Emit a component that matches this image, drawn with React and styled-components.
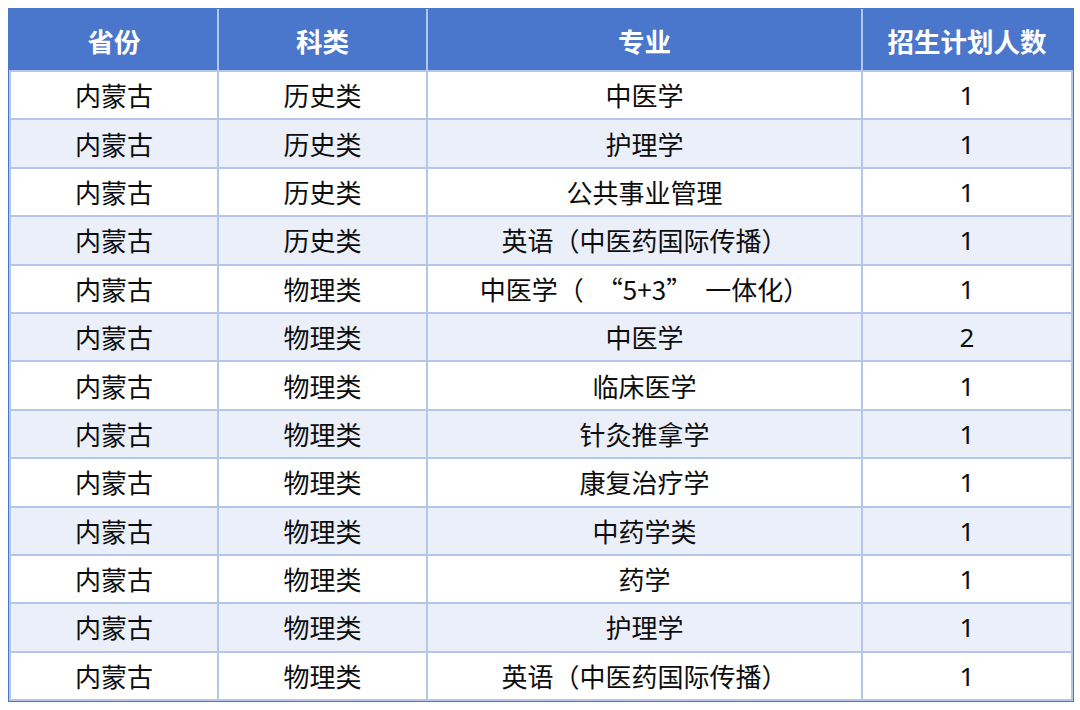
import React from "react";
import styled, { createGlobalStyle } from "styled-components";

const GlobalStyle = createGlobalStyle`
  html, body {
    margin: 0;
    padding: 0;
    background: #ffffff;
  }
  body {
    font-family: "Microsoft YaHei", "Noto Sans CJK SC", "Noto Sans", sans-serif;
  }
`;

const Page = styled.div`
  width: 1080px;
  height: 710px;
  padding: 9px 0 0 9px;
  box-sizing: border-box;
`;

const Table = styled.table`
  width: 1062px;
  border-collapse: collapse;
  table-layout: fixed;
  border: 2px solid #4a76cc;
  box-shadow: 0 0 0 1px #4a76cc;
`;

const HeadCell = styled.th`
  height: 59px;
  padding: 0;
  background: #4a76cc;
  color: #ffffff;
  font-size: 26.5px;
  font-weight: 700;
  text-align: center;
  border-left: 2px solid #b4c7ea;
  border-bottom: 0;
  &:first-child {
    border-left: 0;
  }
`;

const Row = styled.tr`
  height: 48.4px;
  background: ${(p) => (p.$alt ? "#eaeff9" : "#ffffff")};
`;

const Cell = styled.td`
  padding: 0;
  font-size: 26px;
  color: #0d0d0d;
  text-align: center;
  line-height: 1;
  border: 2px solid #b4c7ea;
  font-family: ${(p) =>
    p.$num
      ? '"Noto Sans", "Open Sans", sans-serif'
      : '"Microsoft YaHei", "Noto Sans CJK SC", sans-serif'};
`;

const rows = [
  ["内蒙古", "历史类", "中医学", 1],
  ["内蒙古", "历史类", "护理学", 1],
  ["内蒙古", "历史类", "公共事业管理", 1],
  ["内蒙古", "历史类", "英语（中医药国际传播）", 1],
  ["内蒙古", "物理类", "中医学（\u2002“5+3”\u2002一体化）", 1],
  ["内蒙古", "物理类", "中医学", 2],
  ["内蒙古", "物理类", "临床医学", 1],
  ["内蒙古", "物理类", "针灸推拿学", 1],
  ["内蒙古", "物理类", "康复治疗学", 1],
  ["内蒙古", "物理类", "中药学类", 1],
  ["内蒙古", "物理类", "药学", 1],
  ["内蒙古", "物理类", "护理学", 1],
  ["内蒙古", "物理类", "英语（中医药国际传播）", 1],
];

export default function App() {
  return (
    <Page>
      <GlobalStyle />
      <Table>
        <colgroup>
          <col style={{ width: 208 }} />
          <col style={{ width: 209 }} />
          <col style={{ width: 435 }} />
          <col style={{ width: 210 }} />
        </colgroup>
        <thead>
          <tr>
            <HeadCell>省份</HeadCell>
            <HeadCell>科类</HeadCell>
            <HeadCell>专业</HeadCell>
            <HeadCell>招生计划人数</HeadCell>
          </tr>
        </thead>
        <tbody>
          {rows.map(([prov, cat, major, num], i) => (
            <Row key={i} $alt={i % 2 === 1}>
              <Cell>{prov}</Cell>
              <Cell>{cat}</Cell>
              <Cell>{major}</Cell>
              <Cell $num>{num}</Cell>
            </Row>
          ))}
        </tbody>
      </Table>
    </Page>
  );
}
